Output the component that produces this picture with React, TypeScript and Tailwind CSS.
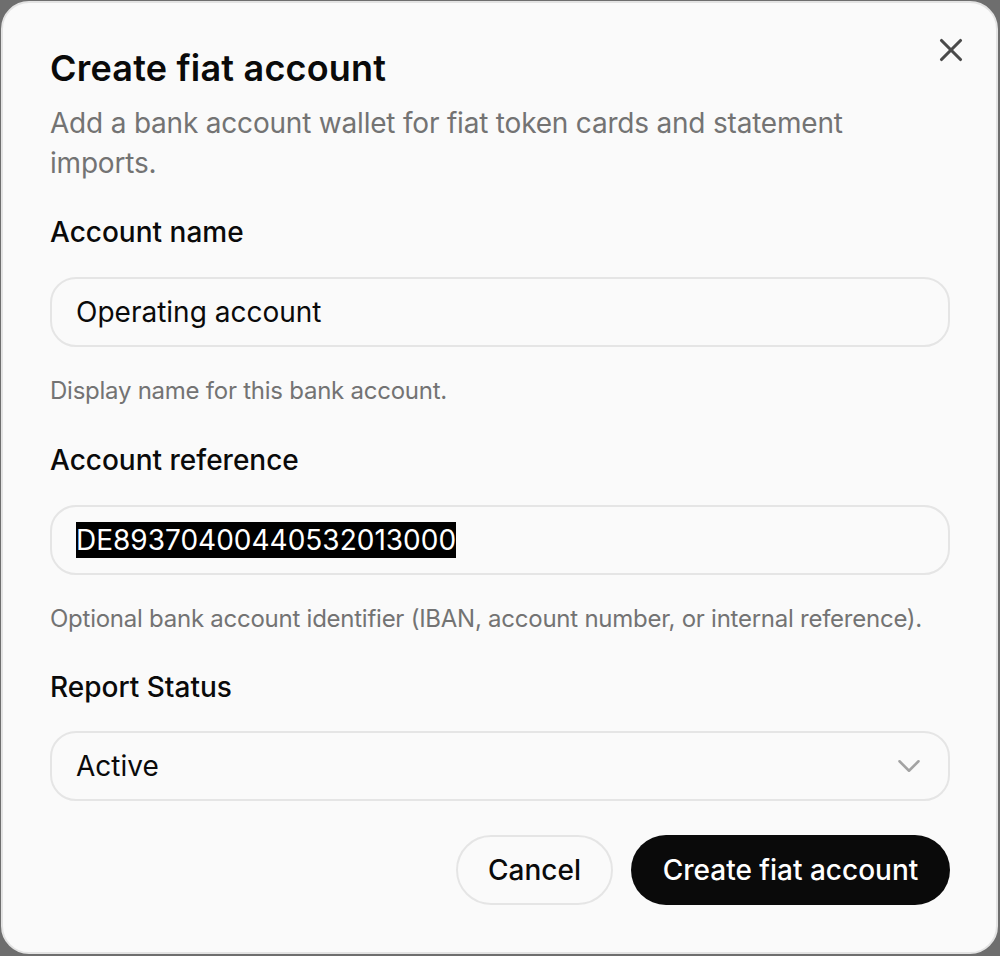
import React from "react";
import { X, ChevronDown } from "lucide-react";

function Field({
  label,
  children,
  hint,
  className = "",
}: {
  label: string;
  children: React.ReactNode;
  hint?: string;
  className?: string;
}) {
  return (
    <div className={"flex flex-col " + className}>
      <label className="text-[28px] leading-[40px] font-medium text-[#0a0a0a]">{label}</label>
      <div className="mt-[25px]">{children}</div>
      {hint && (
        <p className="mt-[28px] text-[24px] leading-[32px] text-[#737373] tracking-[-0.25px]">{hint}</p>
      )}
    </div>
  );
}

export default function App() {
  return (
    <div
      className="w-[1000px] h-[956px] bg-[#6e6e6e] overflow-hidden"
      style={{ fontFamily: "Inter, 'Noto Sans', sans-serif" }}
    >
      <div className="relative m-px w-[997px] h-[953px] rounded-[28px] border-2 border-[#e3e3e3] bg-[#fafafa] pl-[47px] pr-[46px] pt-[37px]">
        <button className="absolute right-[26px] top-[28px] text-[#4a4a4a]">
          <X size={38} strokeWidth={2} />
        </button>
        <h2 className="text-[36px] leading-[56px] font-semibold text-[#0a0a0a] tracking-[0.2px]">
          Create fiat account
        </h2>
        <p className="mt-[7px] text-[28px] leading-[40px] text-[#737373] pr-[60px] tracking-[-0.2px]">
          Add a bank account wallet for fiat token cards and statement imports.
        </p>
        <div className="flex flex-col">
          <Field className="mt-[29px]" label="Account name" hint="Display name for this bank account.">
            <div className="h-[70px] rounded-[26px] border-2 border-[#e5e5e5] bg-[#fafafa] flex items-center pl-[24px] text-[28px] text-[#0a0a0a]">
              Operating account
            </div>
          </Field>
          <Field
            className="mt-[33px]"
            label="Account reference"
            hint="Optional bank account identifier (IBAN, account number, or internal reference)."
          >
            <div className="h-[70px] rounded-[26px] border-2 border-[#e5e5e5] bg-[#fafafa] flex items-center pl-[24px] text-[28px]">
              <span className="bg-black text-white leading-[36px]">DE89370400440532013000</span>
            </div>
          </Field>
          <Field className="mt-[32px]" label="Report Status">
            <div className="-mt-[1px] h-[70px] rounded-[26px] border-2 border-[#e5e5e5] bg-[#fafafa] flex items-center justify-between pl-[24px] pr-[20px] text-[28px] text-[#0a0a0a]">
              <span>Active</span>
              <ChevronDown size={38} strokeWidth={1.6} className="text-[#a3a3a3]" />
            </div>
          </Field>
        </div>
        <div className="mt-[34px] flex justify-end gap-[18px]">
          <button className="h-[70px] w-[157px] rounded-full border-2 border-[#e5e5e5] bg-[#fafafa] text-[28px] font-medium text-[#0a0a0a]">
            Cancel
          </button>
          <button className="h-[70px] w-[319px] rounded-full bg-[#0a0a0a] text-[28px] font-medium text-white">
            Create fiat account
          </button>
        </div>
      </div>
    </div>
  );
}
